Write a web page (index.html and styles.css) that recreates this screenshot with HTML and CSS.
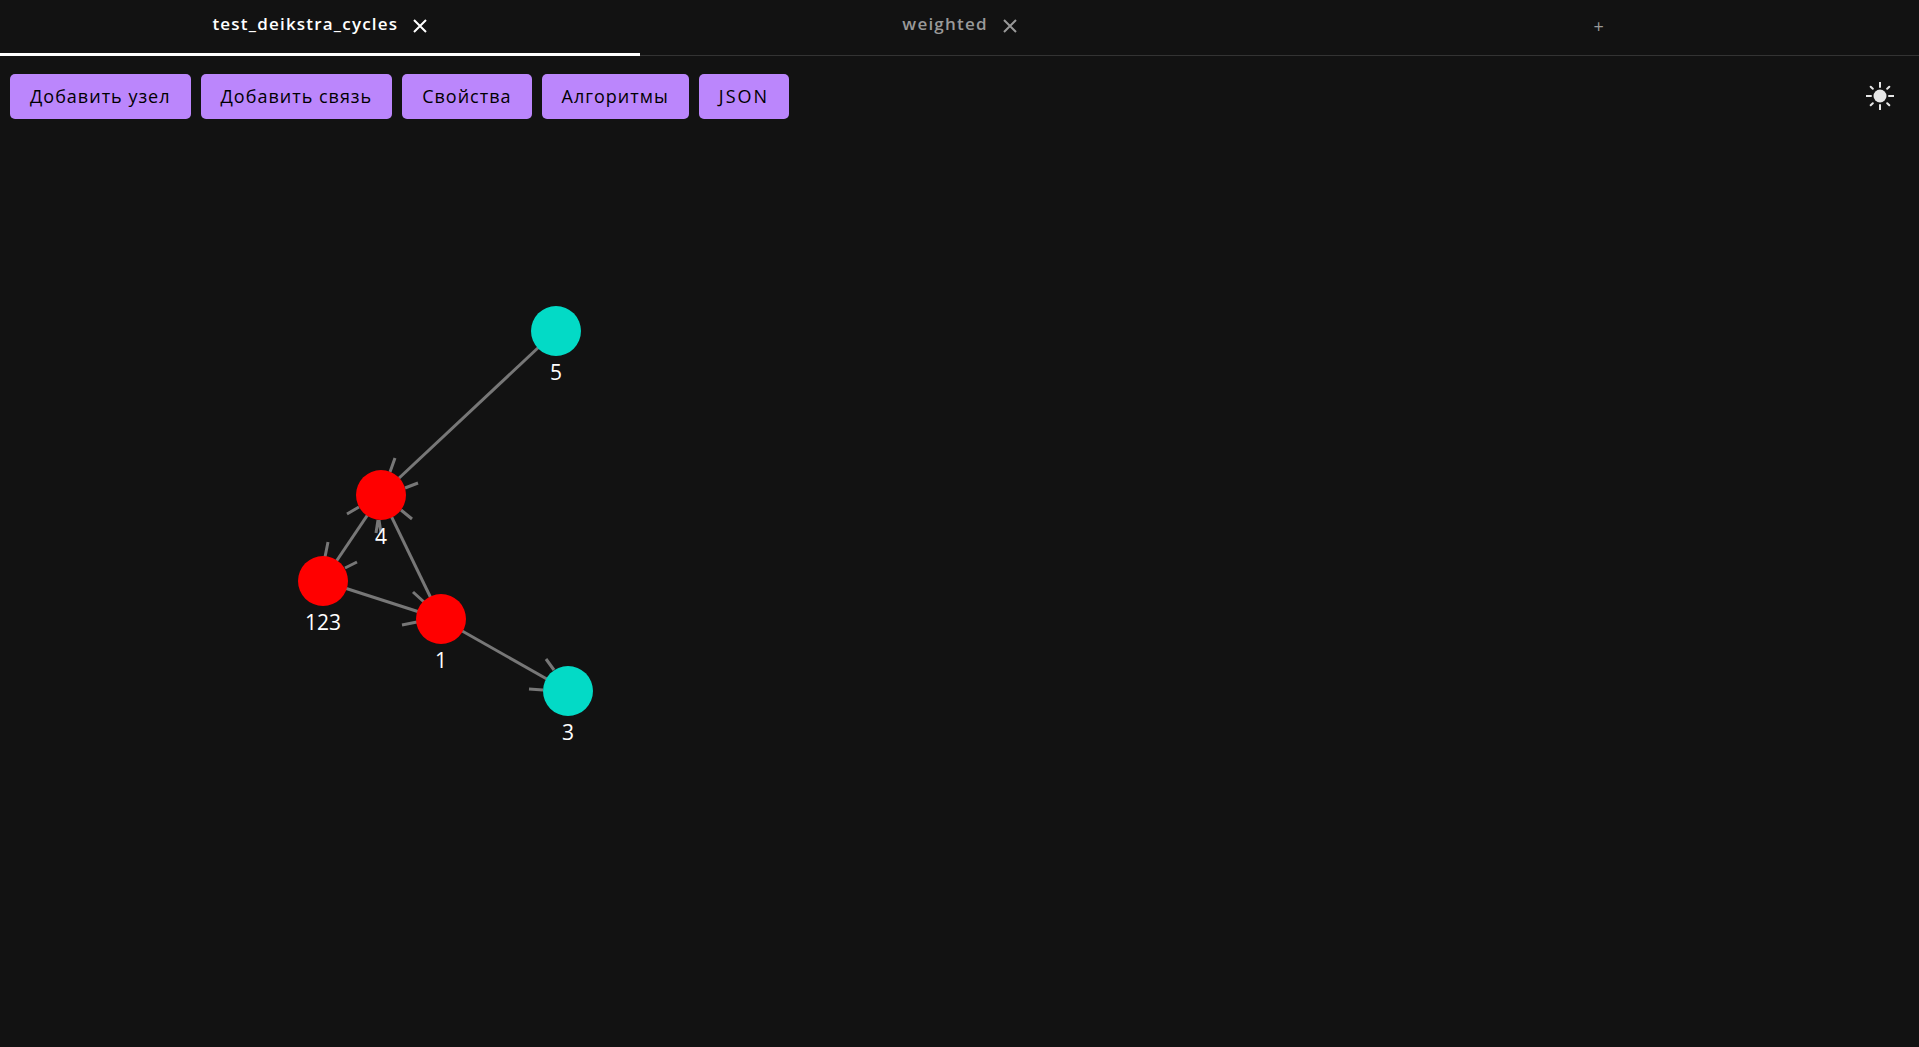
FILE: index.html
```html
<!DOCTYPE html>
<html lang="ru">
<head>
    <meta charset="UTF-8">
    <meta name="viewport" content="width=device-width, initial-scale=1.0">
    <title>Граф</title>
    <link rel="stylesheet" href="styles.css">
</head>
<body>
<div class="tabs">
    <div class="tab active">
        <span class="tab-name">test_deikstra_cycles</span>
        <svg class="tab-close" width="14" height="14" viewBox="0 0 14 14"><path d="M1 1 13 13M13 1 1 13"/></svg>
    </div>
    <div class="tab">
        <span class="tab-name">weighted</span>
        <svg class="tab-close" width="14" height="14" viewBox="0 0 14 14"><path d="M1 1 13 13M13 1 1 13"/></svg>
    </div>
    <div class="tab tab-add">+</div>
</div>

<div class="toolbar">
    <button class="btn">Добавить узел</button>
    <button class="btn">Добавить связь</button>
    <button class="btn">Свойства</button>
    <button class="btn">Алгоритмы</button>
    <button class="btn btn-json">JSON</button>
    <svg class="theme" width="28" height="28" viewBox="-14 -14 28 28">
        <circle r="6.5"/>
        <path d="M0-13.5V-9M0 9V13.5M-13.5 0H-9M9 0H13.5M-9.3-9.3-7.2-7.2M7.2 7.2 9.3 9.3M9.3-9.3 7.2-7.2M-7.2 7.2-9.3 9.3"/>
    </svg>
</div>

<!-- координаты графа совпадают с координатами страницы -->
<svg class="graph" viewBox="0 129 1919 918">
    <g class="edges">
        <line x1="556" y1="331" x2="381" y2="495"/>
        <line x1="381" y1="495" x2="323" y2="581"/>
        <line x1="381" y1="495" x2="441" y2="619"/>
        <line x1="323" y1="581" x2="441" y2="619"/>
        <line x1="441" y1="619" x2="568" y2="691"/>
    </g>
    <g class="arrows">
        <path d="M395 458 390 472M418 483 405 488M412 519 401 510M347 514 359 507M376 533 378 520M381 533 379 520"/>
        <path d="M328 542 325 557M357 562 345 568"/>
        <path d="M413 592 424 602M402 625 417 622"/>
        <path d="M546 659 554 670M529 689 543 690"/>
    </g>
    <g class="nodes">
        <circle class="node-red" cx="381" cy="495" r="25"/>
        <circle class="node-red" cx="323" cy="581" r="25"/>
        <circle class="node-red" cx="441" cy="619" r="25"/>
        <circle class="node-teal" cx="568" cy="691" r="25"/>
        <circle class="node-teal" cx="556" cy="331" r="25"/>
    </g>
    <g class="labels">
        <text x="381" y="544">4</text>
        <text x="323" y="630">123</text>
        <text x="441" y="668">1</text>
        <text x="568" y="740">3</text>
        <text x="556" y="380">5</text>
    </g>
</svg>
</body>
</html>
```

FILE: styles.css
```css
* {
    box-sizing: border-box;
}
html, body {
    height: 100%;
}
body {
    margin: 0;
    display: flex;
    flex-direction: column;
    overflow: hidden;
    background: #121212;
    font-family: "Open Sans", "Noto Sans", sans-serif;
}
.tabs {
    display: flex;
    height: 56px;
    border-bottom: 1px solid #333;
}
.tab {
    flex: 1;
    display: flex;
    justify-content: center;
    align-items: center;
    gap: 15px;
    height: 56px;
    padding-bottom: 5px;
    color: #999;
    font-size: 17px;
    font-weight: 600;
    letter-spacing: 1.2px;
}
.tab.active {
    color: #fff;
    border-bottom: 3px solid #fff;
    padding-bottom: 2px;
}
.tab-name {
    margin-top: -4px;
}
.tab-close {
    fill: none;
    stroke: #999;
    stroke-width: 2;
}
.active .tab-close {
    stroke: #fff;
}
.tab-add {
    font-size: 18px;
    font-weight: 400;
    padding-bottom: 5px;
}
.toolbar {
    display: flex;
    align-items: center;
    gap: 10px;
    padding: 18px 25px 10px 10px;
}
.btn {
    height: 45px;
    padding: 0 20px 2px;
    border: none;
    border-radius: 5px;
    background: #bb86fc;
    color: #000;
    font-family: inherit;
    font-size: 18px;
    letter-spacing: 1px;
}
.btn-json {
    letter-spacing: 2px;
}
.theme {
    margin-left: auto;
    margin-top: -1px;
    fill: #e6e6e6;
    stroke-linecap: round;
}
.theme path {
    fill: none;
    stroke: #e6e6e6;
    stroke-width: 2;
}
.graph {
    flex: 1;
    display: block;
    width: 100%;
    min-height: 0;
}
.edges line, .arrows path {
    fill: none;
    stroke: #777;
    stroke-width: 3;
}
.node-red {
    fill: #f00;
}
.node-teal {
    fill: #03dac6;
}
.labels text {
    fill: #fff;
    font-size: 21px;
    text-anchor: middle;
}
```
